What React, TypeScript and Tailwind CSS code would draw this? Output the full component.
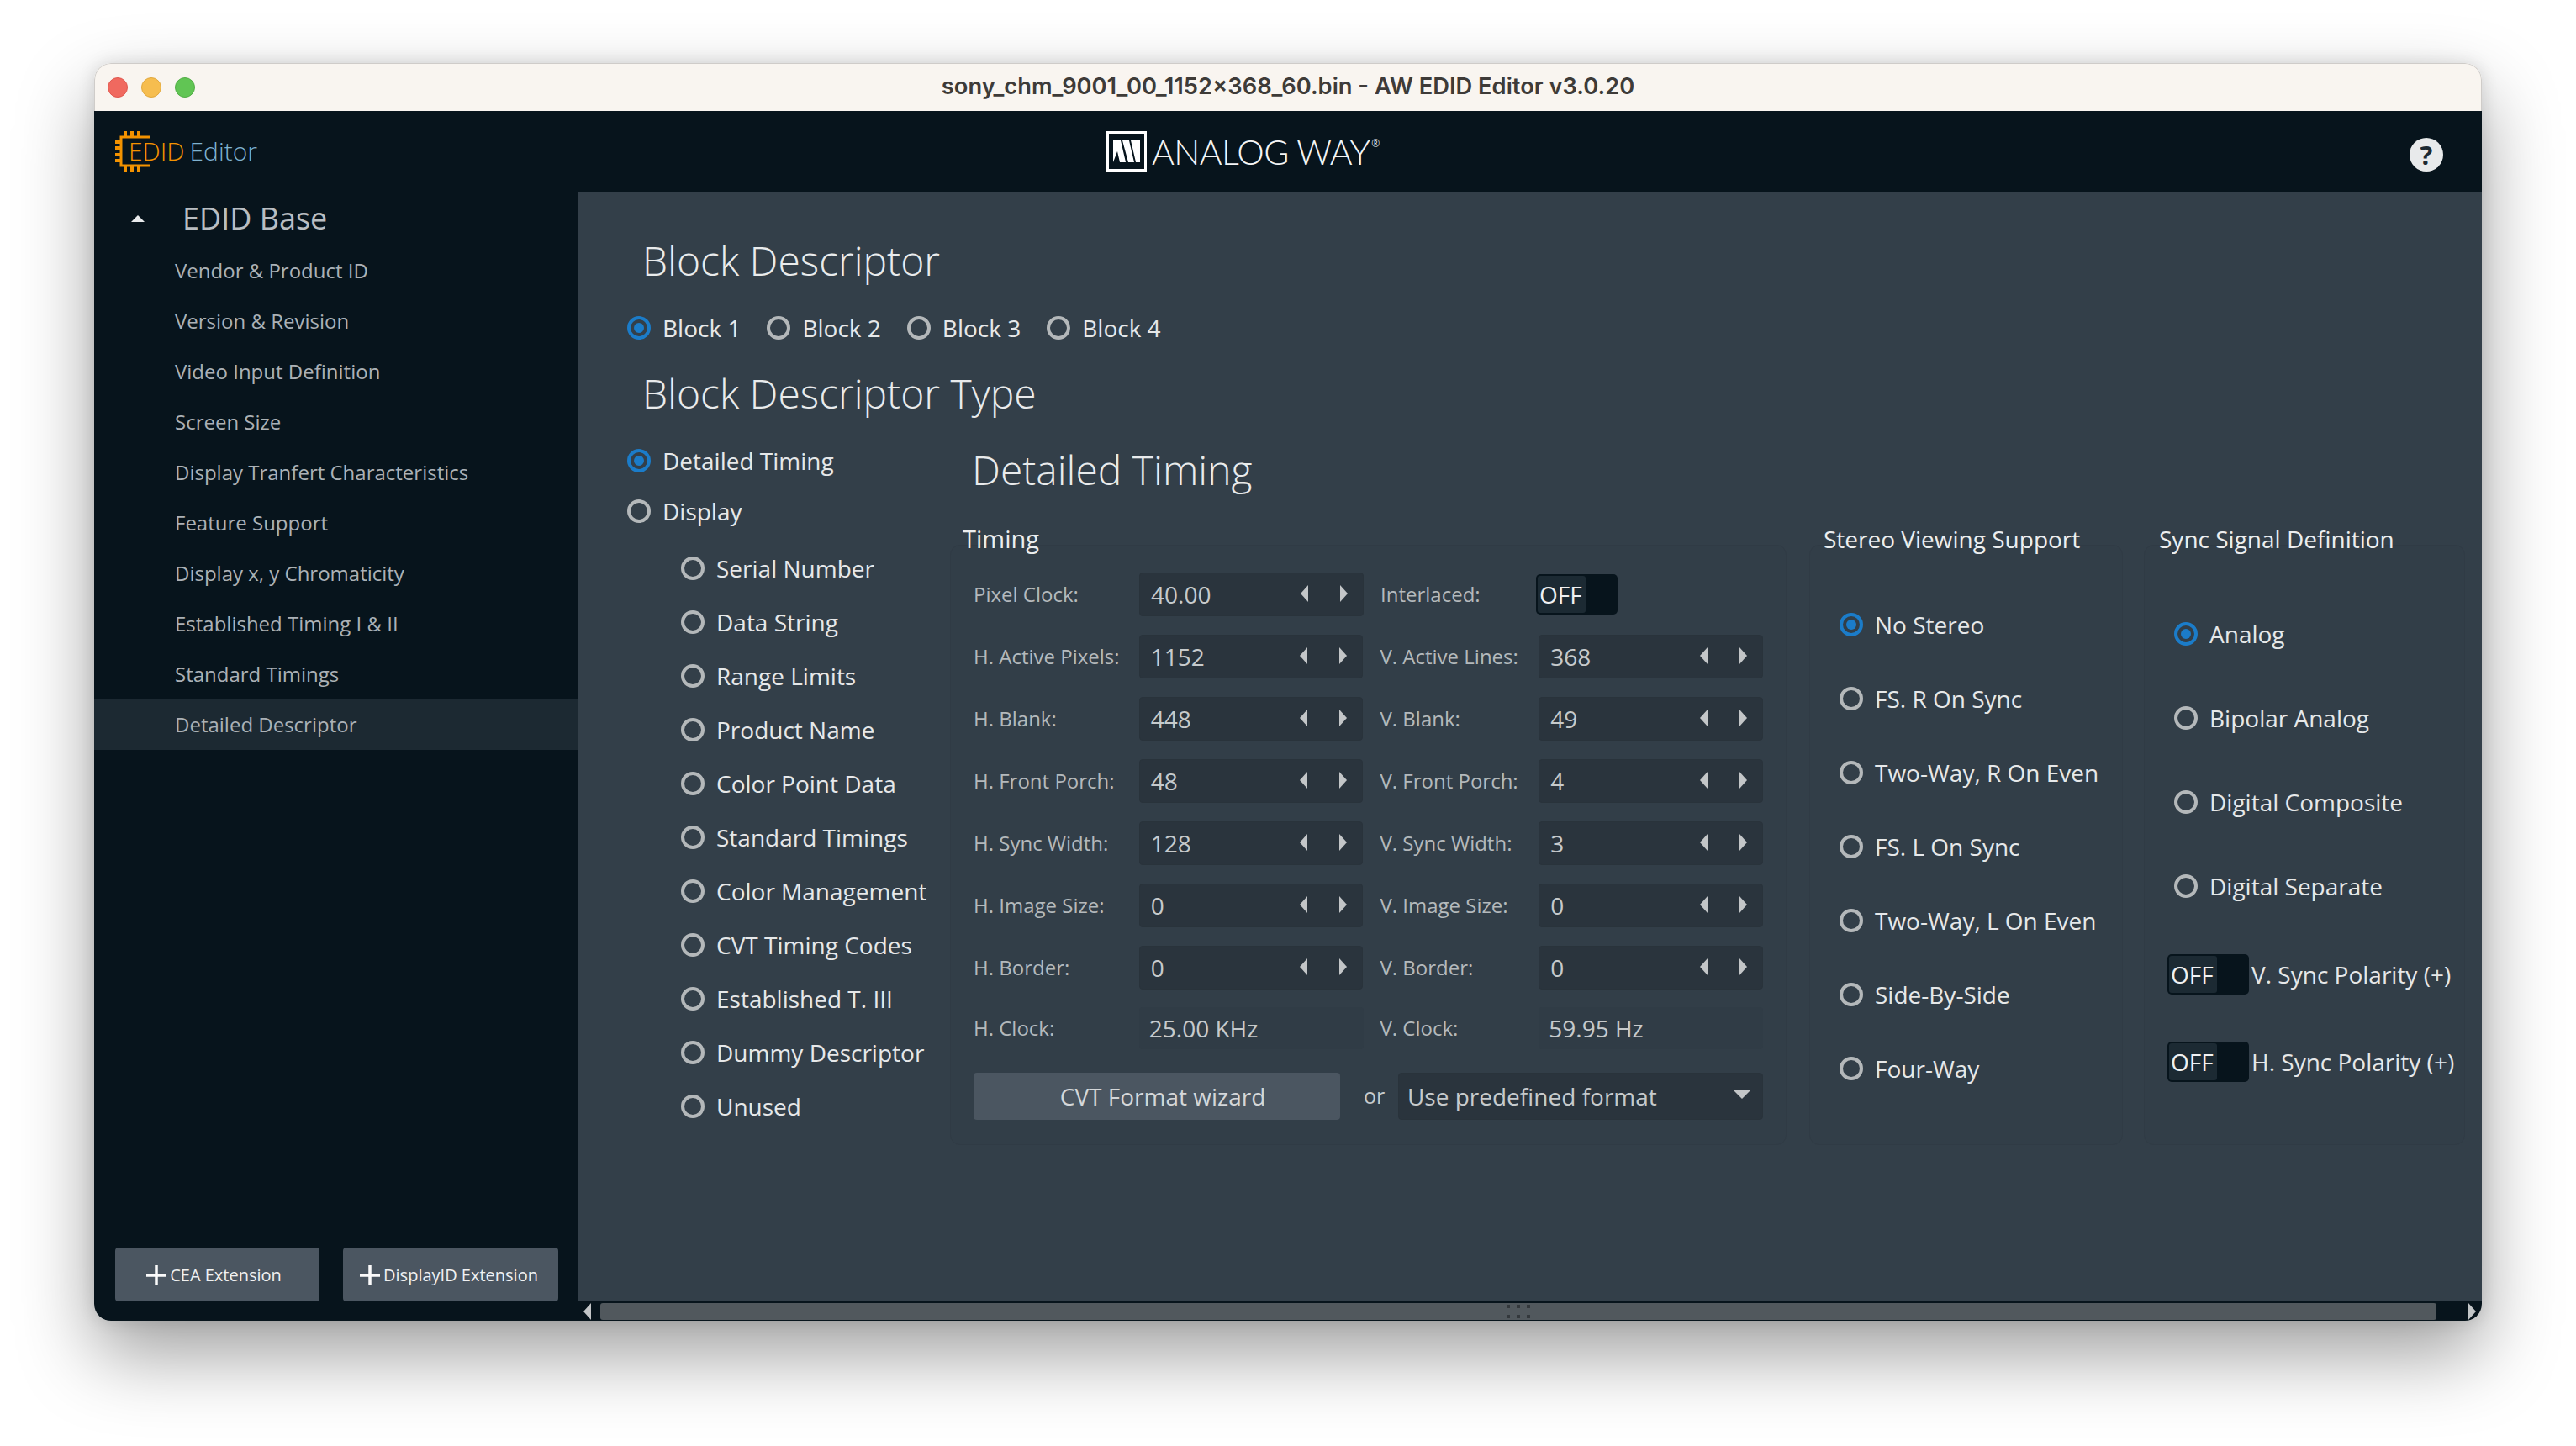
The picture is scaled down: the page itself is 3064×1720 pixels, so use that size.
import React from 'react';

const navItems = [
  'Vendor & Product ID',
  'Version & Revision',
  'Video Input Definition',
  'Screen Size',
  'Display Tranfert Characteristics',
  'Feature Support',
  'Display x, y Chromaticity',
  'Established Timing I & II',
  'Standard Timings',
  'Detailed Descriptor',
];

const descriptorTypes = [
  'Serial Number',
  'Data String',
  'Range Limits',
  'Product Name',
  'Color Point Data',
  'Standard Timings',
  'Color Management',
  'CVT Timing Codes',
  'Established T. III',
  'Dummy Descriptor',
  'Unused',
];

const timingRows = [
  ['H. Active Pixels:', '1152', 'V. Active Lines:', '368'],
  ['H. Blank:', '448', 'V. Blank:', '49'],
  ['H. Front Porch:', '48', 'V. Front Porch:', '4'],
  ['H. Sync Width:', '128', 'V. Sync Width:', '3'],
  ['H. Image Size:', '0', 'V. Image Size:', '0'],
  ['H. Border:', '0', 'V. Border:', '0'],
];

const stereoModes = ['No Stereo', 'FS. R On Sync', 'Two-Way, R On Even', 'FS. L On Sync', 'Two-Way, L On Even', 'Side-By-Side', 'Four-Way'];
const syncTypes = ['Analog', 'Bipolar Analog', 'Digital Composite', 'Digital Separate'];

function Radio({ label, checked = false }: { label: string; checked?: boolean }) {
  return (
    <div className="flex items-center gap-[14px] text-[28px] text-[#e6e8e9]">
      <span className={`flex h-[28px] w-[28px] shrink-0 items-center justify-center rounded-full border-[4px] ${checked ? 'border-[#1b7cc9]' : 'border-[#b4b8ba]'}`}>
        {checked && <span className="h-[12px] w-[12px] rounded-full bg-[#1b7cc9]" />}
      </span>
      <span>{label}</span>
    </div>
  );
}

function Arrow({ dir }: { dir: 'left' | 'right' }) {
  return (
    <svg width="10" height="20" viewBox="0 0 10 20" className="shrink-0">
      <path d={dir === 'left' ? 'M10 0 L10 20 L1 10 Z' : 'M0 0 L0 20 L9 10 Z'} fill="#c3c6c8" />
    </svg>
  );
}

function NumberInput({ value }: { value: string }) {
  return (
    <div className="flex h-[52px] w-[267px] items-center justify-between rounded-[4px] border border-[#29333b] bg-[#2a343d] pl-[13px] pr-[17px] text-[28px] text-[#c6cacc]">
      <span>{value}</span>
      <div className="mb-[2px] flex items-center gap-[38px]">
        <Arrow dir="left" />
        <Arrow dir="right" />
      </div>
    </div>
  );
}

function OffToggle() {
  return (
    <div className="flex h-[48px] w-[97px] shrink-0 rounded-[5px] bg-[#07141c] p-[2px]">
      <span className="flex w-[57px] items-center rounded-[3px] bg-[#1c2a33] pl-[2px] text-[28px] text-[#f0f1f2]">OFF</span>
    </div>
  );
}

function Sidebar() {
  return (
    <aside className="flex w-[576px] shrink-0 flex-col bg-[#07141c] font-['Open_Sans',sans-serif]">
      <div className="flex h-[64px] items-center pl-[44px]">
        <svg width="16" height="8" viewBox="0 0 16 8">
          <path d="M8 0 L16 8 L0 8 Z" fill="#e9ebec" />
        </svg>
        <span className="ml-[45px] text-[36px] text-[#b9bec2]">EDID Base</span>
      </div>
      {navItems.map((item) => (
        <div
          key={item}
          className={`flex h-[60px] items-center pl-[96px] text-[24px] text-[#abb1b6] ${item === 'Detailed Descriptor' ? 'bg-[#1c2932]' : ''}`}
        >
          {item}
        </div>
      ))}
      <div className="mt-auto flex gap-[28px] pb-[23px] pl-[25px]">
        <button className="flex h-[64px] w-[243px] items-center justify-center gap-[4px] rounded-[4px] bg-[#4b5661] pr-[8px] pt-[2px] text-[20px] text-[#f0f1f2]">
          <svg width="24" height="24" viewBox="0 0 24 24">
            <path d="M12 0 V24 M0 12 H24" stroke="#fafafa" strokeWidth="3.5" />
          </svg>
          CEA Extension
        </button>
        <button className="flex h-[64px] w-[256px] items-center justify-center gap-[4px] rounded-[4px] bg-[#4b5661] pr-[4px] pt-[2px] text-[20px] text-[#f0f1f2]">
          <svg width="24" height="24" viewBox="0 0 24 24">
            <path d="M12 0 V24 M0 12 H24" stroke="#fafafa" strokeWidth="3.5" />
          </svg>
          DisplayID Extension
        </button>
      </div>
    </aside>
  );
}

function TimingPanel() {
  return (
    <div className="w-[995px] shrink-0">
      <div className="relative z-10 ml-[15px] h-[40px] text-[29px] leading-[40px] text-[#eceeef]">Timing</div>
      <div className="mt-[-13px] flex h-[714px] flex-col rounded-[12px] border border-[#303b45] bg-[#323e48] pl-[27px] pr-[27px] pt-[32px]">
        <div className="flex h-[52px] items-center">
          <span className="w-[197px] text-[24px] text-[#b4b9bc]">Pixel Clock:</span>
          <NumberInput value="40.00" />
          <span className="ml-[20px] w-[185px] text-[24px] text-[#b4b9bc]">Interlaced:</span>
          <OffToggle />
        </div>
        {timingRows.map(([hLabel, hValue, vLabel, vValue]) => (
          <div key={hLabel} className="mt-[22px] flex h-[52px] items-center">
            <span className="w-[197px] text-[24px] text-[#b4b9bc]">{hLabel}</span>
            <NumberInput value={hValue} />
            <span className="ml-[20px] w-[189px] text-[24px] text-[#b4b9bc]">{vLabel}</span>
            <NumberInput value={vValue} />
          </div>
        ))}
        <div className="mt-[21px] flex h-[50px] items-center text-[24px] text-[#b4b9bc]">
          <span className="w-[197px]">H. Clock:</span>
          <span className="flex h-full w-[267px] items-center rounded-[4px] bg-[#303c46] pl-[12px] text-[28px] text-[#c6cacc]">25.00 KHz</span>
          <span className="ml-[20px] w-[189px]">V. Clock:</span>
          <span className="flex h-full w-[267px] items-center rounded-[4px] bg-[#303c46] pl-[12px] text-[28px] text-[#c6cacc]">59.95 Hz</span>
        </div>
        <div className="mt-[28px] flex items-center">
          <button className="h-[56px] w-[437px] rounded-[4px] bg-[#4b5661] pl-[14px] text-[28px] text-[#d4d7d9]">CVT Format wizard</button>
          <span className="ml-[28px] w-[41px] text-[25px] text-[#c6cacc]">or</span>
          <div className="flex h-[56px] w-[435px] items-center justify-between rounded-[4px] border border-[#29333b] bg-[#2a343d] pl-[10px] pr-[14px] text-[28px] text-[#c6cacc]">
            Use predefined format
            <svg width="20" height="10" viewBox="0 0 20 10" className="mb-[4px]">
              <path d="M0 0 L20 0 L10 10 Z" fill="#c3c6c8" />
            </svg>
          </div>
        </div>
      </div>
    </div>
  );
}

function StereoPanel() {
  return (
    <div className="ml-[27px] w-[373px] shrink-0">
      <div className="relative z-10 ml-[17px] h-[40px] text-[28px] leading-[40px] text-[#eceeef]">Stereo Viewing Support</div>
      <div className="mt-[-13px] flex h-[714px] flex-col gap-[60px] rounded-[12px] border border-[#303b45] bg-[#323e48] pl-[35px] pt-[80px]">
        {stereoModes.map((mode, i) => (
          <div key={mode} className="flex h-[28px] items-center">
            <Radio label={mode} checked={i === 0} />
          </div>
        ))}
      </div>
    </div>
  );
}

function SyncPanel() {
  return (
    <div className="ml-[25px] w-[382px] shrink-0">
      <div className="relative z-10 ml-[18px] h-[40px] text-[28px] leading-[40px] text-[#eceeef]">Sync Signal Definition</div>
      <div className="mt-[-13px] flex h-[714px] flex-col rounded-[12px] border border-[#303b45] bg-[#323e48] pl-[35px] pt-[91px]">
        <div className="flex flex-col gap-[72px]">
          {syncTypes.map((type, i) => (
            <div key={type} className="flex h-[28px] items-center">
              <Radio label={type} checked={i === 0} />
            </div>
          ))}
        </div>
        <div className="ml-[-8px] mt-[67px] flex items-center gap-[3px] text-[28px] text-[#e6e8e9]">
          <OffToggle />
          V. Sync Polarity (+)
        </div>
        <div className="ml-[-8px] mt-[56px] flex items-center gap-[3px] text-[28px] text-[#e6e8e9]">
          <OffToggle />
          H. Sync Polarity (+)
        </div>
      </div>
    </div>
  );
}

function MainContent() {
  return (
    <main className="flex min-w-0 flex-1 flex-col bg-[#07141c] font-['Open_Sans',sans-serif]">
      <div className="h-[1320px] bg-[#333f49] pl-[58px] pt-[48px]">
        <h2 className="ml-[18px] h-[68px] text-[48px] font-light leading-[68px] text-[#e9ebec]">Block Descriptor</h2>
        <div className="mt-[26px] flex h-[40px] items-center gap-[31px]">
          <Radio label="Block 1" checked />
          <Radio label="Block 2" />
          <Radio label="Block 3" />
          <Radio label="Block 4" />
        </div>
        <h2 className="ml-[18px] mt-[24px] h-[68px] text-[48px] font-light leading-[68px] text-[#e9ebec]">Block Descriptor Type</h2>
        <div className="flex">
          <div className="w-[384px] shrink-0 pt-[16px]">
            <div className="flex h-[60px] items-center"><Radio label="Detailed Timing" checked /></div>
            <div className="flex h-[60px] items-center"><Radio label="Display" /></div>
            <div className="mt-[6px] flex flex-col pl-[64px]">
              {descriptorTypes.map((name) => (
                <div key={name} className="flex h-[64px] items-center">
                  <Radio label={name} />
                </div>
              ))}
            </div>
          </div>
          <div>
            <h2 className="ml-[26px] mt-[23px] h-[68px] text-[48px] font-light leading-[68px] text-[#e9ebec]">Detailed Timing</h2>
            <div className="mt-[28px] flex">
              <TimingPanel />
              <StereoPanel />
              <SyncPanel />
            </div>
          </div>
        </div>
      </div>
      <div className="flex h-[23px] items-center pl-[5px] pr-[6px]">
        <Arrow dir="left" />
        <div className="relative ml-[11px] h-[20px] w-[2184px] rounded-[3px] bg-[#51585d]">
          <div className="absolute left-[1078px] top-[2px] grid grid-cols-3 gap-[8px]">
            {Array.from({ length: 6 }).map((_, i) => (
              <span key={i} className="h-[4px] w-[4px] bg-[#33383c]" />
            ))}
          </div>
        </div>
        <div className="ml-auto"><Arrow dir="right" /></div>
      </div>
    </main>
  );
}

export default function App() {
  return (
    <div className="h-[1720px] w-[3064px] bg-white pl-[112px] pt-[75px]">
      <div className="flex h-[1496px] w-[2840px] flex-col overflow-hidden rounded-[20px] shadow-[0_40px_90px_rgba(0,0,0,0.38),0_0_20px_rgba(0,0,0,0.12)]">
        {/* title bar */}
        <div className="relative flex h-[57px] shrink-0 items-center justify-center rounded-t-[20px] border border-b-0 border-[#cfccc9] bg-[#f9f5f0]">
          <div className="absolute left-[15px] top-[16px] flex gap-[16px]">
            <span className="h-[24px] w-[24px] rounded-full border border-[#e0584f] bg-[#f0695f]" />
            <span className="h-[24px] w-[24px] rounded-full border border-[#e0a83f] bg-[#f6bd4f]" />
            <span className="h-[24px] w-[24px] rounded-full border border-[#52ad46] bg-[#61c554]" />
          </div>
          <span className="mb-[2px] font-['Inter',sans-serif] text-[27.3px] font-semibold text-[#3e3b38]">
            sony_chm_9001_00_1152x368_60.bin - AW EDID Editor v3.0.20
          </span>
        </div>
        {/* app header */}
        <header className="flex h-[96px] shrink-0 items-center bg-[#07141c]">
          <div className="relative ml-[25px] flex h-[48px] w-[1179px] items-center font-['Open_Sans',sans-serif] text-[30px] font-light leading-none">
            <svg width="42" height="48" viewBox="0 0 42 48" className="absolute left-0 top-0">
              <path d="M41 7 H7 V41 H41" fill="none" stroke="#f39200" strokeWidth="3" />
              <path d="M12 0 V6 M20 0 V6 M28 0 V6 M12 42 V48 M20 42 V48 M28 42 V48 M0 13 H6 M0 20 H6 M0 28 H6 M0 35 H6" stroke="#f39200" strokeWidth="4" />
            </svg>
            <span className="ml-[16px] text-[#f39200]">EDID</span>
            <span className="ml-[6px] text-[#7fb2d0]">Editor</span>
          </div>
          <div className="flex h-[48px] items-center">
            <svg width="48" height="48" viewBox="0 0 48 48">
              <rect x="1.5" y="1.5" width="45" height="45" fill="none" stroke="#fff" strokeWidth="3" />
              <path d="M8 11 H17 L23 37 H16 L13 24 L8 37 Z M19 11 H27 L33 37 H26 Z M29 11 H40 V37 H35 Z" fill="#fff" />
            </svg>
            <span className="ml-[6px] font-['Lato',sans-serif] text-[41px] font-light leading-none tracking-[-0.6px] text-[#f4f5f5]">ANALOG WAY</span>
            <span className="mb-[18px] ml-[2px] text-[12px] text-[#d8dadb]">®</span>
          </div>
          <div className="ml-auto mr-[46px] mt-[8px] flex h-[40px] w-[40px] items-center justify-center rounded-full bg-[#e8eaeb] font-['Open_Sans',sans-serif] text-[31px] font-bold leading-none text-[#1c2932]">
            ?
          </div>
        </header>
        <div className="flex min-h-0 flex-1">
          <Sidebar />
          <MainContent />
        </div>
      </div>
    </div>
  );
}
